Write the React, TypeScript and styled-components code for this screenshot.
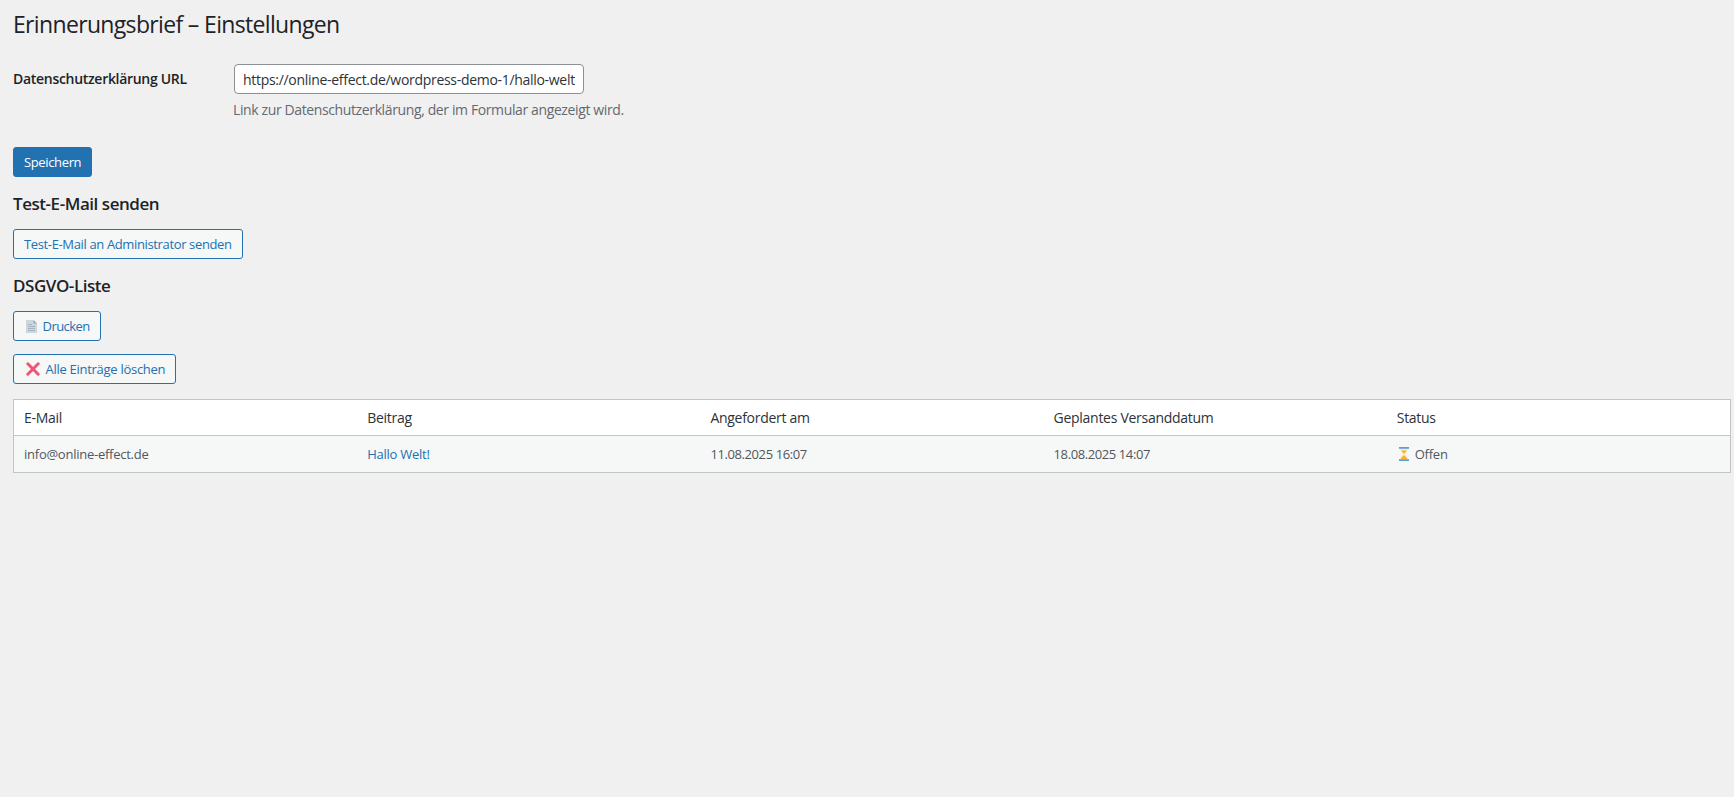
import React from 'react'
import styled, { createGlobalStyle } from 'styled-components'

const GlobalStyle = createGlobalStyle`
  html, body {
    margin: 0;
    min-height: 100%;
    background: #f0f0f1;
  }
  body {
    color: #3c434a;
    font-family: "Open Sans", "Noto Sans", sans-serif;
    font-size: 13px;
    line-height: 1.4;
  }
`

const Wrap = styled.div`
  display: flex;
  flex-direction: column;
  align-items: flex-start;
  padding: 9px 3px 0 13px;
  min-height: 788px;
`

const Title = styled.h1`
  margin: 0;
  padding: 0 0 4px;
  font-size: 23px;
  font-weight: 400;
  line-height: 30px;
  color: #1d2327;
  letter-spacing: -0.66px;
`

const FieldRow = styled.div`
  display: grid;
  grid-template-columns: 220px 1fr;
  padding: 21px 0 27px;
`

const FieldLabel = styled.label`
  font-size: 14px;
  font-weight: 600;
  line-height: 30px;
  color: #1d2327;
  letter-spacing: -0.3px;
`

const FieldBody = styled.div`
  display: flex;
  flex-direction: column;
  align-items: flex-start;
`

const UrlInput = styled.input`
  box-sizing: border-box;
  width: 350px;
  height: 30px;
  margin: 0 0 0 1px;
  padding: 0 8px;
  border: 1px solid #8c8f94;
  border-radius: 4px;
  background: #fff;
  color: #2c3338;
  font: 14px/20px "Open Sans", "Noto Sans", sans-serif;
  letter-spacing: -0.3px;
`

const Hint = styled.p`
  margin: 6px 0 0;
  font-size: 14px;
  line-height: 20px;
  color: #646970;
  letter-spacing: -0.38px;
`

const Button = styled.button<{ $primary?: boolean; $tracking?: number }>`
  display: inline-flex;
  align-items: center;
  gap: 5.5px;
  box-sizing: border-box;
  height: 30px;
  margin: 0;
  padding: 0 10px;
  border: 1px solid #2271b1;
  border-radius: 3px;
  background: ${({ $primary }) => ($primary ? '#2271b1' : '#f6f7f7')};
  color: ${({ $primary }) => ($primary ? '#fff' : '#2271b1')};
  font: 13px/28px "Open Sans", "Noto Sans", sans-serif;
  letter-spacing: ${({ $tracking = -0.36 }) => $tracking}px;
  white-space: nowrap;

  svg {
    margin-left: 2px;
  }
`

const SectionTitle = styled.h2`
  margin: 16px 0 14px;
  font-size: 17px;
  font-weight: 600;
  line-height: 22px;
  color: #1d2327;
  letter-spacing: -0.45px;
`

const ButtonStack = styled.div`
  display: flex;
  flex-direction: column;
  align-items: flex-start;
  gap: 13px;
`

const Table = styled.table`
  width: 100%;
  margin-top: 15px;
  table-layout: fixed;
  border-collapse: separate;
  border-spacing: 0;
  border: 1px solid #c3c4c7;
  background: #fff;
`

const HeadCell = styled.th`
  padding: 8px 10px;
  border-bottom: 1px solid #c3c4c7;
  font-size: 14px;
  font-weight: 400;
  line-height: 19px;
  text-align: left;
  color: #2c3338;
  letter-spacing: -0.28px;
`

const BodyRow = styled.tr`
  background: #f6f7f7;
`

const BodyCell = styled.td<{ $date?: boolean }>`
  padding: 9px 10px;
  font-size: 13px;
  line-height: 18px;
  color: #50575e;
  letter-spacing: ${({ $date }) => ($date ? '-0.4px' : '-0.25px')};
`

const PostLink = styled.a`
  color: #2271b1;
  text-decoration: none;
`

const StatusLabel = styled.span`
  display: flex;
  align-items: center;
  gap: 6px;
  padding-left: 2px;
  height: 18px;
`

function PageIcon() {
  return (
    <svg width="11" height="13" viewBox="0 0 11 13">
      <path d="M0 0h7.5L11 3.5V13H0z" fill="#ccd6dd" />
      <path d="M7.5 0L11 3.5H7.5z" fill="#99aab5" />
      <path d="M2 4h4v.8H2zM2 6h7v.8H2zM2 8h7v.8H2zM2 10h7v.8H2z" fill="#99aab5" />
    </svg>
  )
}

function CrossIcon() {
  return (
    <svg width="14" height="14" viewBox="0 0 14 14">
      <path d="M1.8 1.8l10.4 10.4M12.2 1.8L1.8 12.2" stroke="#ee5577" strokeWidth="3" strokeLinecap="round" />
    </svg>
  )
}

function HourglassIcon() {
  return (
    <svg width="10" height="14" viewBox="0 0 10 14">
      <path d="M1 1.5h8C9 5 5.8 6 5.5 7 5.8 8 9 9 9 12.5H1C1 9 4.2 8 4.5 7 4.2 6 1 5 1 1.5z" fill="#ffe8b6" />
      <path d="M2.4 3.5h5.2C7 5 5.4 6 5 7 4.6 6 3 5 2.4 3.5zM1.8 12C2.4 10.2 4.2 9 5 8.2 5.8 9 7.6 10.2 8.2 12z" fill="#ffac33" />
      <path d="M0 0h10v1.7H0zM0 12.3h10V14H0z" fill="#5a9fd8" />
    </svg>
  )
}

const columns = ['E-Mail', 'Beitrag', 'Angefordert am', 'Geplantes Versanddatum', 'Status']

export default function App() {
  return (
    <>
      <GlobalStyle />
      <Wrap>
        <Title>Erinnerungsbrief – Einstellungen</Title>
        <FieldRow>
          <FieldLabel htmlFor="privacy-url">Datenschutzerklärung URL</FieldLabel>
          <FieldBody>
            <UrlInput
              id="privacy-url"
              type="text"
              defaultValue="https://online-effect.de/wordpress-demo-1/hallo-welt"
            />
            <Hint>Link zur Datenschutzerklärung, der im Formular angezeigt wird.</Hint>
          </FieldBody>
        </FieldRow>
        <Button $primary>Speichern</Button>

        <SectionTitle>Test-E-Mail senden</SectionTitle>
        <Button>Test-E-Mail an Administrator senden</Button>

        <SectionTitle>DSGVO-Liste</SectionTitle>
        <ButtonStack>
          <Button $tracking={-0.55}>
            <PageIcon />
            Drucken
          </Button>
          <Button $tracking={-0.28}>
            <CrossIcon />
            Alle Einträge löschen
          </Button>
        </ButtonStack>

        <Table>
          <thead>
            <tr>
              {columns.map((col) => (
                <HeadCell key={col}>{col}</HeadCell>
              ))}
            </tr>
          </thead>
          <tbody>
            <BodyRow>
              <BodyCell>info@online-effect.de</BodyCell>
              <BodyCell>
                <PostLink href="#">Hallo Welt!</PostLink>
              </BodyCell>
              <BodyCell $date>11.08.2025 16:07</BodyCell>
              <BodyCell $date>18.08.2025 14:07</BodyCell>
              <BodyCell>
                <StatusLabel>
                  <HourglassIcon />
                  Offen
                </StatusLabel>
              </BodyCell>
            </BodyRow>
          </tbody>
        </Table>
      </Wrap>
    </>
  )
}
